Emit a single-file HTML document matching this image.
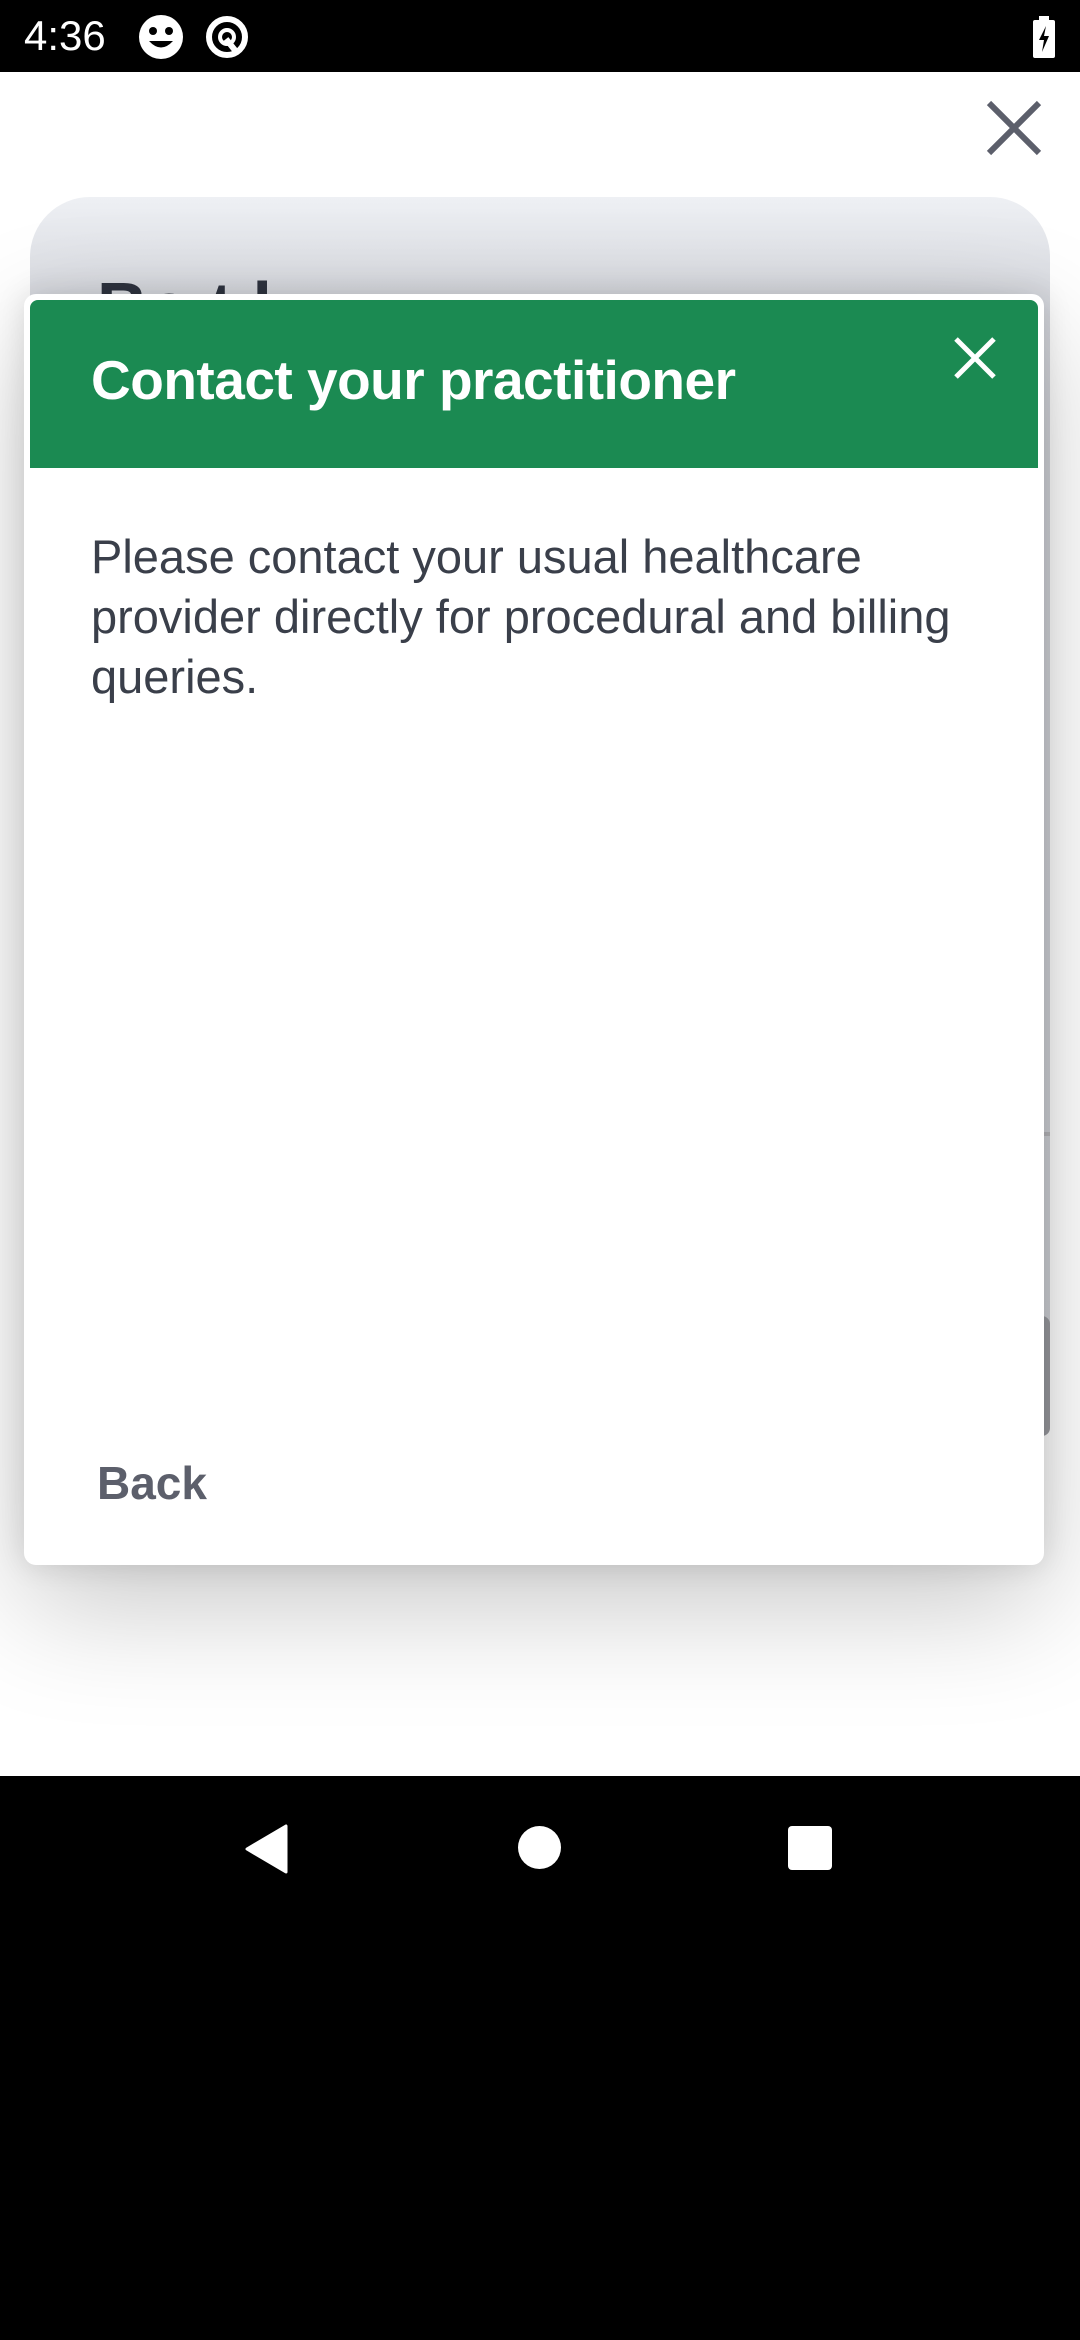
<!DOCTYPE html>
<html><head><meta charset="utf-8"><style>
*{margin:0;padding:0;box-sizing:border-box}
body{width:1080px;height:2340px;background:#fff;position:relative;overflow:hidden;font-family:"Liberation Sans",sans-serif}
.status{position:absolute;left:0;top:0;width:1080px;height:72px;background:#000;color:#fff}
.nav{position:absolute;left:0;top:1776px;width:1080px;height:564px;background:#000}
.bgcard{position:absolute;left:30px;top:197px;width:1020px;height:1250px;border-radius:60px;background:linear-gradient(#eef0f4,#d4d6dc 120px,#cfd1d6);}
.modal{position:absolute;left:24px;top:294px;width:1020px;height:1271px;background:#fff;border-radius:12px;box-shadow:0 40px 120px rgba(0,0,0,0.22),0 0 30px rgba(0,0,0,0.12)}
.head{position:absolute;left:6px;top:6px;width:1008px;height:168px;background:#1b8a52;border-radius:8px 8px 0 0}
.title{position:absolute;left:61px;top:48px;font-size:55px;font-weight:bold;color:#fff;letter-spacing:-0.5px}
.body{position:absolute;left:67px;top:233px;width:900px;font-size:47px;line-height:60px;color:#3a3f4a}
.back{position:absolute;left:73px;top:1162px;font-size:46px;font-weight:bold;color:#5c5f6b}
</style></head><body>
<div class="status">
<div style="position:absolute;left:24px;top:12px;font-size:42px">4:36</div>
<svg style="position:absolute;left:138px;top:14px" width="46" height="46" viewBox="0 0 46 46"><circle cx="23" cy="23" r="22" fill="#fff"/><circle cx="15" cy="17" r="4" fill="#000"/><circle cx="31" cy="17" r="4" fill="#000"/><path d="M11 27 Q23 40 35 27 Z" fill="#000"/></svg>
<svg style="position:absolute;left:204px;top:14px" width="46" height="46" viewBox="0 0 46 46"><circle cx="23" cy="23" r="18" fill="none" stroke="#fff" stroke-width="6"/><circle cx="23" cy="23" r="7" fill="none" stroke="#fff" stroke-width="4"/><path d="M22 25 L34 40" stroke="#fff" stroke-width="6"/></svg>
<svg style="position:absolute;left:1032px;top:16px" width="24" height="42" viewBox="0 0 24 42"><rect x="7" y="0" width="10" height="5" fill="#fff"/><rect x="1" y="4" width="22" height="38" rx="2" fill="#fff"/><path d="M14 10 L7 24 H12 L10 36 L17 20 H12 Z" fill="#000"/></svg>
</div>
<svg style="position:absolute;left:986px;top:100px" width="56" height="56" viewBox="0 0 56 56"><path d="M3 3 L53 53 M53 3 L3 53" stroke="#5c5f6b" stroke-width="6"/></svg>
<div class="bgcard"><div style="position:absolute;left:67px;top:70px;font-size:70px;font-weight:bold;color:#2f3440">Bo t      l</div></div>
<div style="position:absolute;left:1044px;top:1132px;width:6px;height:4px;background:#b8b8bc"></div>
<div style="position:absolute;left:1040px;top:1316px;width:10px;height:120px;border-radius:0 8px 8px 0;background:#9a9ba0"></div>
<div class="modal">
<div class="head">
<div class="title">Contact your practitioner</div>
<svg style="position:absolute;left:924px;top:37px" width="42" height="42" viewBox="0 0 42 42"><path d="M2 2 L40 40 M40 2 L2 40" stroke="#fff" stroke-width="5"/></svg>
</div>
<div class="body">Please contact your usual healthcare<br>provider directly for procedural and billing<br>queries.</div>
<div class="back">Back</div>
</div>
<div class="nav">
<svg style="position:absolute;left:244px;top:48px" width="46" height="50" viewBox="0 0 46 50"><path d="M42 2 L42 48 L3 25 Z" fill="#fff" stroke="#fff" stroke-width="3" stroke-linejoin="round"/></svg>
<div style="position:absolute;left:518px;top:50px;width:43px;height:43px;border-radius:50%;background:#fff"></div>
<div style="position:absolute;left:788px;top:50px;width:44px;height:44px;border-radius:4px;background:#fff"></div>
</div>
</body></html>
